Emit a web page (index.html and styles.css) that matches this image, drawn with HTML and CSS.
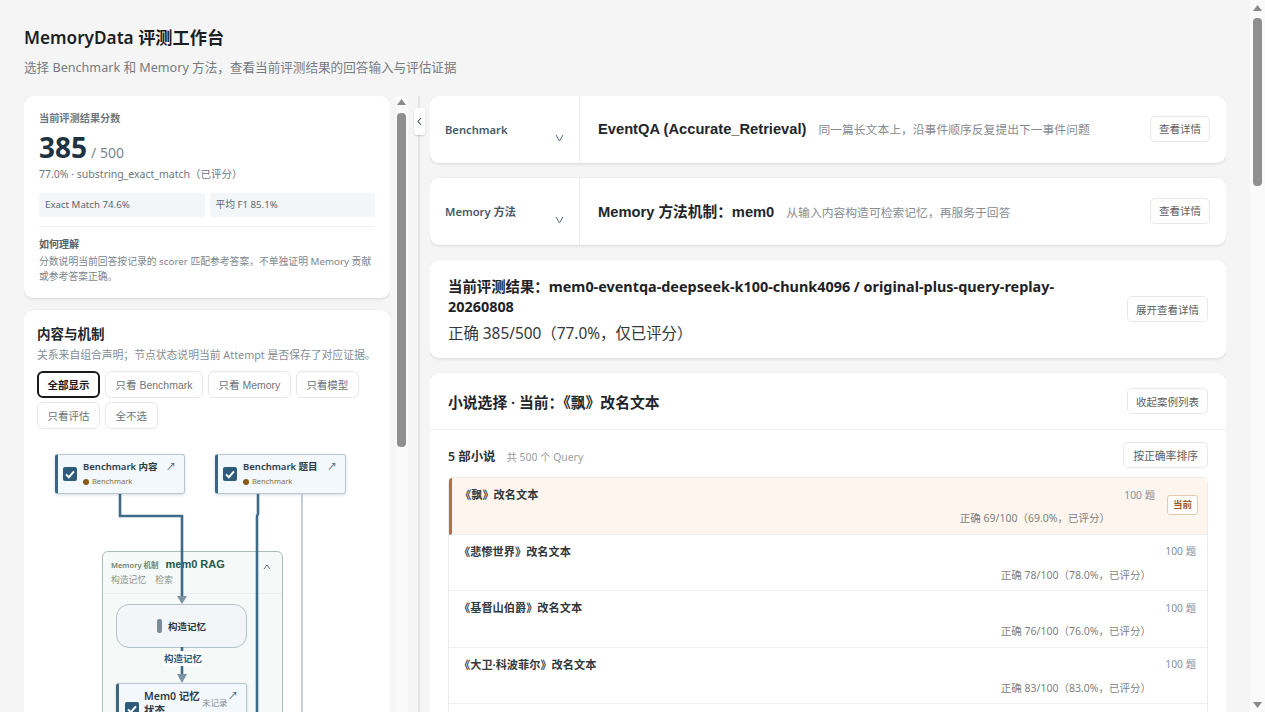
FILE: index.html
```html
<!DOCTYPE html>
<html>

<head>
  <meta charset="utf-8">

  <title>MemoryData 评测工作台</title>

  <link rel="stylesheet" href="styles.css">
</head>

<body>
  <div class="page">
    <header class="pageHead">
      <h1>MemoryData 评测工作台</h1>
      <p>选择 Benchmark 和 Memory 方法，查看当前评测结果的回答输入与评估证据</p>
    </header>

    <div class="layout">
      <aside class="side">
        <section class="card scoreCard">
          <div class="scoreLabel">当前评测结果分数</div>
          <div class="scoreLine"><strong>385</strong><span>/ 500</span></div>
          <div class="scoreNote">77.0% · substring_exact_match（已评分）</div>
          <div class="metrics">
            <div>Exact Match 74.6%</div>
            <div>平均 F1 85.1%</div>
          </div>
          <div class="explain">
            <h3>如何理解</h3>
            <p>分数说明当前回答按记录的 scorer 匹配参考答案，不单独证明 Memory 贡献或参考答案正确。</p>
          </div>
        </section>

        <section class="card flowCard">
          <h2>内容与机制</h2>
          <p class="flowNote">关系来自组合声明；节点状态说明当前 Attempt 是否保存了对应证据。</p>
          <div class="chips">
            <button class="chip chipOn">全部显示</button>
            <button class="chip">只看 Benchmark</button>
            <button class="chip">只看 Memory</button>
            <button class="chip">只看模型</button>
            <button class="chip">只看评估</button>
            <button class="chip">全不选</button>
          </div>

          <div class="canvas">
            <div class="node nodeA">
              <svg class="check" viewBox="0 0 14 14"><rect width="14" height="14" rx="2" fill="#2f5b7b"/><path d="M3 7.4l2.8 2.8L11 4.4" fill="none" stroke="#fff" stroke-width="2"/></svg>
              <div class="nodeText">
                <b>Benchmark 内容</b>
                <small><i></i>Benchmark</small>
              </div>
              <span class="nodeOpen">↗</span>
            </div>
            <div class="node nodeB">
              <svg class="check" viewBox="0 0 14 14"><rect width="14" height="14" rx="2" fill="#2f5b7b"/><path d="M3 7.4l2.8 2.8L11 4.4" fill="none" stroke="#fff" stroke-width="2"/></svg>
              <div class="nodeText">
                <b>Benchmark 题目</b>
                <small><i></i>Benchmark</small>
              </div>
              <span class="nodeOpen">↗</span>
            </div>

            <div class="group">
              <div class="groupHead">
                <div class="groupTitle"><span>Memory 机制</span><b>mem0 RAG</b></div>
                <div class="groupSub"><span>构造记忆</span><span>检索</span></div>
                <svg class="groupFold" width="8" height="6" viewBox="0 0 8 6"><path d="M1 5l3-4 3 4" fill="none" stroke="#5f7280" stroke-width="1"/></svg>
              </div>
              <div class="stepNode"><i></i>构造记忆</div>
              <div class="node memNode">
                <svg class="check" viewBox="0 0 14 14"><rect width="14" height="14" rx="2" fill="#2f5b7b"/><path d="M3 7.4l2.8 2.8L11 4.4" fill="none" stroke="#fff" stroke-width="2"/></svg>
                <b>Mem0 记忆状态</b>
                <small>未记录</small>
                <span class="nodeOpen">↗</span>
              </div>
            </div>

            <svg class="edges" width="366" height="300" viewBox="0 0 366 300">
              <path d="M96 65V87H158V167" fill="none" stroke="#3f6a88" stroke-width="2.6"/>
              <path d="M234 65V85L233 87V300" fill="none" stroke="#3f6a88" stroke-width="2.6"/>
              <path d="M278 65V300" fill="none" stroke="#b4c1ce" stroke-width="1.6"/>
              <path d="M153 167h10l-5 8z" fill="#7a93a5"/>
              <path d="M158 218v4" stroke="#3f6a88" stroke-width="2.6"/>
              <path d="M158 235v10" stroke="#3f6a88" stroke-width="2.6"/>
              <path d="M153 245h10l-5 9z" fill="#7a93a5"/>
            </svg>
            <span class="edgeLabel">构造记忆</span>
          </div>
        </section>
      </aside>

      <div class="sideBar">
        <svg class="arrowUp" width="9" height="6" viewBox="0 0 9 6"><path d="M4.5 0L9 6H0z" fill="#8a8a8a"/></svg>
        <div class="sideThumb"></div>
      </div>

      <div class="splitter">
        <button class="foldBtn"><svg width="5" height="9" viewBox="0 0 5 9"><path d="M4 1L1 4.5 4 8" fill="none" stroke="#4f5f6b" stroke-width="1.1"/></svg></button>
      </div>

      <main class="content">
        <section class="card pickCard">
          <div class="pickLeft">
            <span>Benchmark</span>
            <svg width="9" height="8" viewBox="0 0 9 8"><path d="M1 1l3.5 6L8 1" fill="none" stroke="#5c6f7d" stroke-width="1"/></svg>
          </div>
          <div class="pickMain">
            <b>EventQA (Accurate_Retrieval)</b>
            <span>同一篇长文本上，沿事件顺序反复提出下一事件问题</span>
          </div>
          <button class="btn btnSmall">查看详情</button>
        </section>

        <section class="card pickCard">
          <div class="pickLeft">
            <span>Memory 方法</span>
            <svg width="9" height="8" viewBox="0 0 9 8"><path d="M1 1l3.5 6L8 1" fill="none" stroke="#5c6f7d" stroke-width="1"/></svg>
          </div>
          <div class="pickMain">
            <b>Memory 方法机制：mem0</b>
            <span>从输入内容构造可检索记忆，再服务于回答</span>
          </div>
          <button class="btn btnSmall">查看详情</button>
        </section>

        <section class="card resultCard">
          <div class="resultText">
            <h2>当前评测结果：mem0-eventqa-deepseek-k100-chunk4096 / original-plus-query-replay-20260808</h2>
            <p>正确 385/500（77.0%，仅已评分）</p>
          </div>
          <button class="btn">展开查看详情</button>
        </section>

        <section class="card novelCard">
          <div class="novelHead">
            <h2>小说选择 · 当前：《飘》改名文本</h2>
            <button class="btn">收起案例列表</button>
          </div>
          <div class="novelBody">
            <div class="novelBar">
              <div><b>5 部小说</b><span>共 500 个 Query</span></div>
              <button class="btn btnWide">按正确率排序</button>
            </div>
            <ul class="novelList">
              <li class="novel novelOn">
                <div class="novelInfo">
                  <div class="novelTop"><b>《飘》改名文本</b><span>100 题</span></div>
                  <div class="novelScore">正确 69/100（69.0%，已评分）</div>
                </div>
                <em class="tag">当前</em>
              </li>
              <li class="novel">
                <div class="novelInfo">
                  <div class="novelTop"><b>《悲惨世界》改名文本</b><span>100 题</span></div>
                  <div class="novelScore">正确 78/100（78.0%，已评分）</div>
                </div>
              </li>
              <li class="novel">
                <div class="novelInfo">
                  <div class="novelTop"><b>《基督山伯爵》改名文本</b><span>100 题</span></div>
                  <div class="novelScore">正确 76/100（76.0%，已评分）</div>
                </div>
              </li>
              <li class="novel">
                <div class="novelInfo">
                  <div class="novelTop"><b>《大卫·科波菲尔》改名文本</b><span>100 题</span></div>
                  <div class="novelScore">正确 83/100（83.0%，已评分）</div>
                </div>
              </li>
              <li class="novel"></li>
            </ul>
          </div>
        </section>
      </main>
    </div>
  </div>

  <div class="pageBar">
    <svg width="9" height="6" viewBox="0 0 9 6"><path d="M4.5 0L9 6H0z" fill="#8a8a8a"/></svg>
    <div class="pageThumb"></div>
    <svg class="arrowDown" width="9" height="6" viewBox="0 0 9 6"><path d="M4.5 6L9 0H0z" fill="#8a8a8a"/></svg>
  </div>
</body>

</html>
```

FILE: styles.css
```css
* {
  box-sizing: border-box;
}

html,
body {
  height: 100%;
  margin: 0;
  overflow: hidden;
}

body {
  background-color: #f5f5f5;
  color: #1f2429;
  font-family: "Noto Sans", "Noto Sans CJK SC", sans-serif;
}

button {
  font-family: "Liberation Sans", "Noto Sans CJK SC", sans-serif;
}

h1,
h2,
h3,
p,
ul {
  margin: 0;
  padding: 0;
}

.page {
  height: 712px;
  padding: 26px 24px 0;
  display: flex;
  flex-direction: column;
}

.pageHead {
  height: 70px;
}

.pageHead h1 {
  font-size: 17.2px;
  line-height: 24px;
  font-weight: 600;
  color: #1b1f23;
}

.pageHead p {
  margin-top: 8px;
  font-size: 12.6px;
  line-height: 20px;
  color: #757a7f;
}

.layout {
  flex: 1;
  min-height: 0;
  display: flex;
}

.card {
  background-color: #fff;
  border-radius: 9px;
  box-shadow: 0 1px 3px rgba(30, 40, 50, 0.14);
}

/* left column */
.side {
  width: 366px;
  flex: none;
  overflow: hidden;
  display: flex;
  flex-direction: column;
  gap: 12px;
}

.scoreCard {
  height: 202px;
  flex: none;
  padding: 15px 15px 0;
}

.scoreLabel {
  font-size: 10.2px;
  line-height: 14px;
  font-weight: 600;
  color: #6b7780;
}

.scoreLine {
  margin-top: 5px;
  height: 34px;
  display: flex;
  align-items: baseline;
  gap: 4px;
  color: #7b8790;
}

.scoreLine strong {
  font-size: 28px;
  line-height: 34px;
  font-weight: 700;
  color: #1f3342;
}

.scoreLine span {
  font-size: 14px;
}

.scoreNote {
  margin-top: 2px;
  font-size: 10.5px;
  line-height: 16px;
  color: #6b7780;
}

.metrics {
  margin-top: 11px;
  display: grid;
  grid-template-columns: 1fr 1fr;
  gap: 5px;
}

.metrics div {
  height: 24px;
  padding: 0 6px;
  font-size: 9.7px;
  line-height: 24px;
  color: #5b6872;
  background-color: #f2f6f9;
  border-radius: 2px;
}

.explain {
  margin-top: 9px;
  padding-top: 9px;
  border-top: 1px solid #eef0f2;
}

.explain h3 {
  font-size: 10px;
  line-height: 16px;
  font-weight: 600;
  color: #55626c;
}

.explain p {
  margin-top: 2px;
  font-size: 9.8px;
  line-height: 15px;
  color: #7c868e;
}

.flowCard {
  flex: none;
  height: 440px;
  padding: 14px 13px 0;
}

.flowCard h2 {
  font-size: 13.5px;
  line-height: 20px;
  font-weight: 600;
  color: #22282d;
}

.flowNote {
  margin-top: 1px;
  font-size: 10.8px;
  line-height: 20px;
  color: #848d94;
  white-space: nowrap;
}

.chips {
  margin-top: 6px;
  display: flex;
  flex-wrap: wrap;
  gap: 4px 5px;
}

.chip {
  height: 27px;
  padding: 0 9.5px;
  font-size: 10.5px;
  color: #6d757b;
  background-color: #fff;
  border: 1px solid #e6e8ea;
  border-radius: 6px;
}

.chipOn {
  color: #1a1a1a;
  font-weight: 700;
  border: 2px solid #1a1a1a;
  padding: 0 8px;
  width: 63px;
}

/* diagram canvas, nodes sit at their own coordinates */
.canvas {
  position: relative;
  height: 300px;
  margin: 0 -13px;
}

.edges {
  position: absolute;
  left: 0;
  top: 0;
}

.node {
  position: absolute;
  background-color: #f3f8fc;
  border: 1px solid #b9c8d4;
  border-left: 3px solid #3a6583;
  border-radius: 3px;
  box-shadow: 0 1px 3px rgba(40, 70, 90, 0.2);
}

.nodeA {
  left: 31px;
  top: 25px;
  width: 130px;
  height: 40px;
}

.nodeB {
  left: 191px;
  top: 25px;
  width: 131px;
  height: 40px;
}

.check {
  position: absolute;
  left: 5px;
  top: 12px;
  width: 14px;
  height: 14px;
}

.nodeText {
  position: absolute;
  left: 25px;
  top: 5px;
  white-space: nowrap;
}

.nodeText b {
  display: block;
  font-size: 9.5px;
  line-height: 14px;
  font-weight: 600;
  color: #2c3a45;
}

.nodeText small {
  display: flex;
  align-items: center;
  gap: 3px;
  margin-top: 1px;
  font-size: 7.5px;
  line-height: 13px;
  color: #8a6d3e;
}

.nodeText i {
  width: 6px;
  height: 6px;
  border-radius: 50%;
  background-color: #8a5a1c;
}

.nodeOpen {
  position: absolute;
  right: 8px;
  top: 4px;
  font-size: 10px;
  line-height: 14px;
  color: #4a5f6e;
}

.group {
  position: absolute;
  left: 78px;
  top: 122px;
  width: 181px;
  height: 190px;
  background-color: #f5f9f7;
  border: 1px solid #a9bdb8;
  border-radius: 6px;
}

.groupHead {
  position: relative;
  height: 42px;
  padding: 5px 8px 0;
  border-bottom: 1px solid #ebf0ee;
}

.groupTitle {
  display: flex;
  align-items: baseline;
  gap: 7px;
  font-size: 7.5px;
  line-height: 14px;
  font-weight: 600;
  color: #668578;
}

.groupTitle b {
  font-family: "Liberation Sans", sans-serif;
  font-size: 11px;
  color: #24594a;
}

.groupSub {
  display: flex;
  gap: 9px;
  font-size: 8.8px;
  line-height: 16px;
  color: #85948e;
}

.groupFold {
  position: absolute;
  right: 11px;
  top: 12px;
}

.stepNode {
  position: absolute;
  left: 13px;
  top: 52px;
  width: 131px;
  height: 44px;
  display: flex;
  align-items: center;
  justify-content: center;
  gap: 6px;
  font-size: 9.5px;
  font-weight: 600;
  color: #2c3a45;
  background-color: #f3f6f8;
  border: 1px solid #b5c1c8;
  border-radius: 13px;
}

.stepNode i {
  width: 5px;
  height: 14px;
  background-color: #7b8b97;
  border-radius: 2px;
}

.memNode {
  left: 13px;
  top: 131px;
  width: 131px;
  height: 50px;
  border-radius: 3px;
}

.memNode .check {
  top: 18px;
  left: 6px;
}

.memNode b {
  position: absolute;
  left: 25px;
  top: 5px;
  width: 56px;
  font-size: 10.5px;
  line-height: 14px;
  font-weight: 600;
  color: #2c3a45;
}

.memNode small {
  position: absolute;
  left: 83px;
  top: 12px;
  font-size: 8.5px;
  line-height: 14px;
  color: #7f8a92;
}

.edgeLabel {
  position: absolute;
  left: 139px;
  top: 223px;
  padding: 0 1px;
  font-size: 9.5px;
  line-height: 14px;
  font-weight: 600;
  color: #2f5a78;
  background-color: #fff;
  white-space: nowrap;
}

/* scrollbars */
.sideBar {
  position: relative;
  width: 12px;
  flex: none;
  margin-left: 6px;
  background-color: #fafafa;
}

.arrowUp {
  position: absolute;
  left: 1px;
  top: 3px;
}

.sideThumb {
  position: absolute;
  left: 1px;
  top: 17px;
  width: 9px;
  height: 334px;
  background-color: #8f8f8f;
  border-radius: 4px;
}

.splitter {
  position: relative;
  width: 22px;
  flex: none;
}

.splitter::before {
  content: "";
  position: absolute;
  left: 10px;
  top: 0;
  bottom: 0;
  width: 2px;
  background-color: #e4e4e4;
}

.foldBtn {
  position: absolute;
  left: 6px;
  top: 12px;
  width: 11px;
  height: 27px;
  padding: 0;
  display: flex;
  align-items: center;
  justify-content: center;
  background-color: #fff;
  border: 0;
  border-radius: 3px;
  box-shadow: 0 1px 2px rgba(0, 0, 0, 0.16);
}

.pageBar {
  position: fixed;
  top: 0;
  right: 0;
  bottom: 0;
  width: 15px;
  background-color: #fafafa;
}

.pageBar svg {
  position: absolute;
  left: 3px;
  top: 5px;
}

.pageBar .arrowDown {
  top: auto;
  bottom: 4px;
}

.pageThumb {
  position: absolute;
  left: 3px;
  top: 18px;
  width: 9px;
  height: 168px;
  background-color: #8f8f8f;
  border-radius: 4px;
}

/* right column */
.content {
  width: 796px;
  flex: none;
  overflow: hidden;
  display: flex;
  flex-direction: column;
  gap: 15px;
  padding-bottom: 2px;
}

.pickCard {
  height: 67px;
  flex: none;
  display: flex;
  align-items: center;
  padding-right: 16px;
}

.pickLeft {
  position: relative;
  width: 150px;
  height: 100%;
  flex: none;
  padding: 26px 15px 0;
  border-right: 1px solid #eeeeee;
  font-size: 11.2px;
  line-height: 16px;
  font-weight: 600;
  color: #46596a;
}

.pickLeft svg {
  position: absolute;
  left: 125px;
  top: 38px;
}

.pickMain {
  flex: 1;
  padding-left: 18px;
  display: flex;
  align-items: baseline;
  gap: 12px;
  margin-top: -2px;
}

.pickMain b {
  font-family: "Liberation Sans", "Noto Sans CJK SC", sans-serif;
  font-size: 14.7px;
  color: #22262a;
}

.pickMain span {
  font-size: 11.8px;
  color: #868c91;
}

.btn {
  height: 26px;
  padding: 0 8px;
  font-size: 10.5px;
  color: #5e5e5e;
  background-color: #fff;
  border: 1px solid #e6e8ea;
  border-radius: 5px;
  white-space: nowrap;
}

.btnSmall {
  margin-top: -2px;
}

.btnWide {
  padding: 0 9px;
  font-size: 10.8px;
}

.resultCard {
  height: 98px;
  flex: none;
  display: flex;
  align-items: center;
  justify-content: space-between;
  padding: 2px 18px 0;
}

.resultCard .btn {
  margin-top: -2px;
}

.resultText {
  width: 640px;
}

.resultCard h2 {
  font-size: 14.4px;
  line-height: 20px;
  font-weight: 700;
  color: #1e2226;
}

.resultCard p {
  margin-top: 7px;
  font-size: 15.4px;
  line-height: 20px;
  color: #33383c;
}

.novelCard {
  flex: none;
  height: 400px;
}

.novelHead {
  height: 57px;
  padding: 0 18px;
  display: flex;
  align-items: center;
  justify-content: space-between;
  border-bottom: 1px solid #f0f0f0;
}

.novelHead h2 {
  font-size: 14.8px;
  font-weight: 600;
  color: #22262a;
}

.novelBody {
  padding: 12px 18px 0;
}

.novelBar {
  height: 26px;
  display: flex;
  align-items: center;
  justify-content: space-between;
  margin-bottom: 9px;
}

.novelBar b {
  font-size: 12.4px;
  font-weight: 600;
  color: #2d3338;
}

.novelBar span {
  margin-left: 11px;
  font-size: 10.4px;
  color: #9aa0a5;
}

.novelList {
  list-style: none;
  border: 1px solid #ececec;
  border-radius: 6px 6px 0 0;
}

.novel {
  height: 56.5px;
  padding: 7px 11px 0 10px;
  display: flex;
  align-items: flex-start;
  gap: 12px;
  border-bottom: 1px solid #efefef;
}

.novelOn {
  padding-left: 8px;
  background-color: #fdf5ee;
  border-left: 3px solid #b96f3c;
  border-radius: 3px 3px 0 0;
}

.novelInfo {
  flex: 1;
  min-width: 0;
}

.novelTop {
  display: flex;
  justify-content: space-between;
  align-items: center;
  height: 18px;
}

.novelTop b {
  font-size: 11.2px;
  font-weight: 600;
  color: #33383c;
}

.novelTop span {
  font-size: 10.3px;
  color: #8b8f93;
}

.novelScore {
  margin-top: 7px;
  padding-right: 45px;
  text-align: right;
  font-size: 10.5px;
  line-height: 16px;
  color: #7f7f7f;
}

.tag {
  margin-top: 10px;
  margin-right: -2px;
  width: 31px;
  height: 20px;
  font-style: normal;
  font-size: 9.5px;
  font-weight: 600;
  line-height: 18px;
  text-align: center;
  color: #9c5a26;
  background-color: #fff;
  border: 1px solid #e8c9ad;
  border-radius: 3px;
}
```
